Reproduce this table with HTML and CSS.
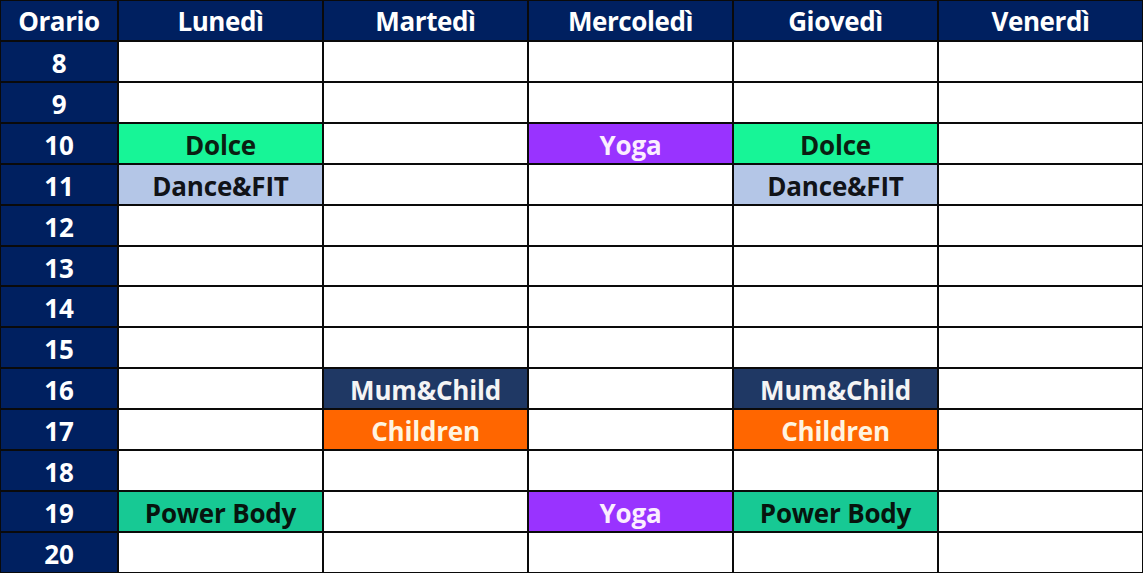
FILE: index.html
```html
<!DOCTYPE html>
<html lang="it">
<head>
<meta charset="utf-8">
<title>Orario</title>
<link rel="stylesheet" href="styles.css">
</head>
<body>
<div class="schedule">
  <div class="cell head">Orario</div>
  <div class="cell head">Lunedì</div>
  <div class="cell head">Martedì</div>
  <div class="cell head">Mercoledì</div>
  <div class="cell head">Giovedì</div>
  <div class="cell head">Venerdì</div>

  <div class="cell hour">8</div><div class="cell"></div><div class="cell"></div><div class="cell"></div><div class="cell"></div><div class="cell"></div>
  <div class="cell hour">9</div><div class="cell"></div><div class="cell"></div><div class="cell"></div><div class="cell"></div><div class="cell"></div>
  <div class="cell hour">10</div><div class="cell dolce">Dolce</div><div class="cell"></div><div class="cell yoga">Yoga</div><div class="cell dolce">Dolce</div><div class="cell"></div>
  <div class="cell hour">11</div><div class="cell dance">Dance&amp;FIT</div><div class="cell"></div><div class="cell"></div><div class="cell dance">Dance&amp;FIT</div><div class="cell"></div>
  <div class="cell hour">12</div><div class="cell"></div><div class="cell"></div><div class="cell"></div><div class="cell"></div><div class="cell"></div>
  <div class="cell hour">13</div><div class="cell"></div><div class="cell"></div><div class="cell"></div><div class="cell"></div><div class="cell"></div>
  <div class="cell hour">14</div><div class="cell"></div><div class="cell"></div><div class="cell"></div><div class="cell"></div><div class="cell"></div>
  <div class="cell hour">15</div><div class="cell"></div><div class="cell"></div><div class="cell"></div><div class="cell"></div><div class="cell"></div>
  <div class="cell hour">16</div><div class="cell"></div><div class="cell mum">Mum&amp;Child</div><div class="cell"></div><div class="cell mum">Mum&amp;Child</div><div class="cell"></div>
  <div class="cell hour">17</div><div class="cell"></div><div class="cell children">Children</div><div class="cell"></div><div class="cell children">Children</div><div class="cell"></div>
  <div class="cell hour">18</div><div class="cell"></div><div class="cell"></div><div class="cell"></div><div class="cell"></div><div class="cell"></div>
  <div class="cell hour">19</div><div class="cell power">Power Body</div><div class="cell"></div><div class="cell yoga">Yoga</div><div class="cell power">Power Body</div><div class="cell"></div>
  <div class="cell hour">20</div><div class="cell"></div><div class="cell"></div><div class="cell"></div><div class="cell"></div><div class="cell"></div>
</div>
</body>
</html>
```

FILE: styles.css
```css
html, body {
  margin: 0;
  padding: 0;
  background: #ffffff;
}

body {
  font-family: "Open Sans", "Liberation Sans", sans-serif;
}

.schedule {
  display: grid;
  grid-template-columns: 116px repeat(5, 1fr);
  grid-template-rows: repeat(14, 1fr);
  gap: 2px;
  padding: 1px;
  width: 1143px;
  height: 573px;
  box-sizing: border-box;
  background: #0a0a0a;
}

.cell {
  background: #ffffff;
  display: flex;
  align-items: center;
  justify-content: center;
  font-weight: 700;
  font-size: 26px;
  letter-spacing: -0.2px;
  line-height: 1;
  padding-top: 3px;
  box-sizing: border-box;
  color: #000000;
}

.head,
.hour {
  background: #002060;
  color: #ffffff;
}

.head {
  padding-top: 2px;
  letter-spacing: -0.4px;
}

.dolce {
  background: #17f597;
  color: #0a1f12;
}

.dance {
  background: #b4c6e7;
  color: #111318;
}

.yoga {
  background: #9933ff;
  color: #fbeeff;
}

.mum {
  background: #1f3864;
  color: #f4f4f4;
}

.children {
  background: #ff6600;
  color: #fff4e0;
}

.power {
  background: #17c994;
  color: #07140e;
}
```
